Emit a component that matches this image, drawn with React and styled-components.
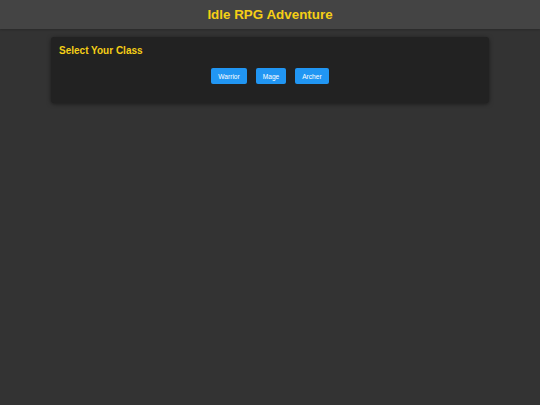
import React from "react";
import styled, { createGlobalStyle } from "styled-components";

const GlobalStyle = createGlobalStyle`
  html, body {
    margin: 0;
    padding: 0;
    background-color: #333333;
    font-family: "Liberation Sans", Arial, sans-serif;
  }
`;

const classes = ["Warrior", "Mage", "Archer"];

function App() {
  return (
    <>
      <GlobalStyle />
      <Page>
        <Header>
          <Title>Idle RPG Adventure</Title>
        </Header>
        <Main>
          <Panel>
            <PanelTitle>Select Your Class</PanelTitle>
            <ButtonRow>
              {classes.map((c) => (
                <ClassButton key={c}>{c}</ClassButton>
              ))}
            </ButtonRow>
          </Panel>
        </Main>
      </Page>
    </>
  );
}

export default App;

const Page = styled.div`
  min-height: 405px;
  background-color: #333333;
`;

const Header = styled.header`
  height: 29px;
  background-color: #444444;
  display: flex;
  align-items: center;
  justify-content: center;
  box-shadow: 0 1px 2px rgba(0, 0, 0, 0.2);
`;

const Title = styled.h1`
  margin: 0;
  font-size: 13.4px;
  font-weight: bold;
  color: #f5cf16;
`;

const Main = styled.main`
  padding: 8px 51px;
`;

const Panel = styled.section`
  background-color: #222222;
  border-radius: 3px;
  padding: 8px 8px 19px;
  box-shadow: 0 1px 4px rgba(0, 0, 0, 0.5);
`;

const PanelTitle = styled.h2`
  margin: 0 0 11px;
  font-size: 10px;
  line-height: 12px;
  font-weight: bold;
  color: #f5cf16;
`;

const ButtonRow = styled.div`
  display: flex;
  justify-content: center;
  gap: 9px;
`;

const ClassButton = styled.button`
  height: 16px;
  padding: 0 7px;
  border: none;
  border-radius: 2px;
  background-color: #2196f3;
  color: #ffffff;
  font-family: "Liberation Sans", Arial, sans-serif;
  font-size: 6.6px;
  cursor: pointer;
`;
